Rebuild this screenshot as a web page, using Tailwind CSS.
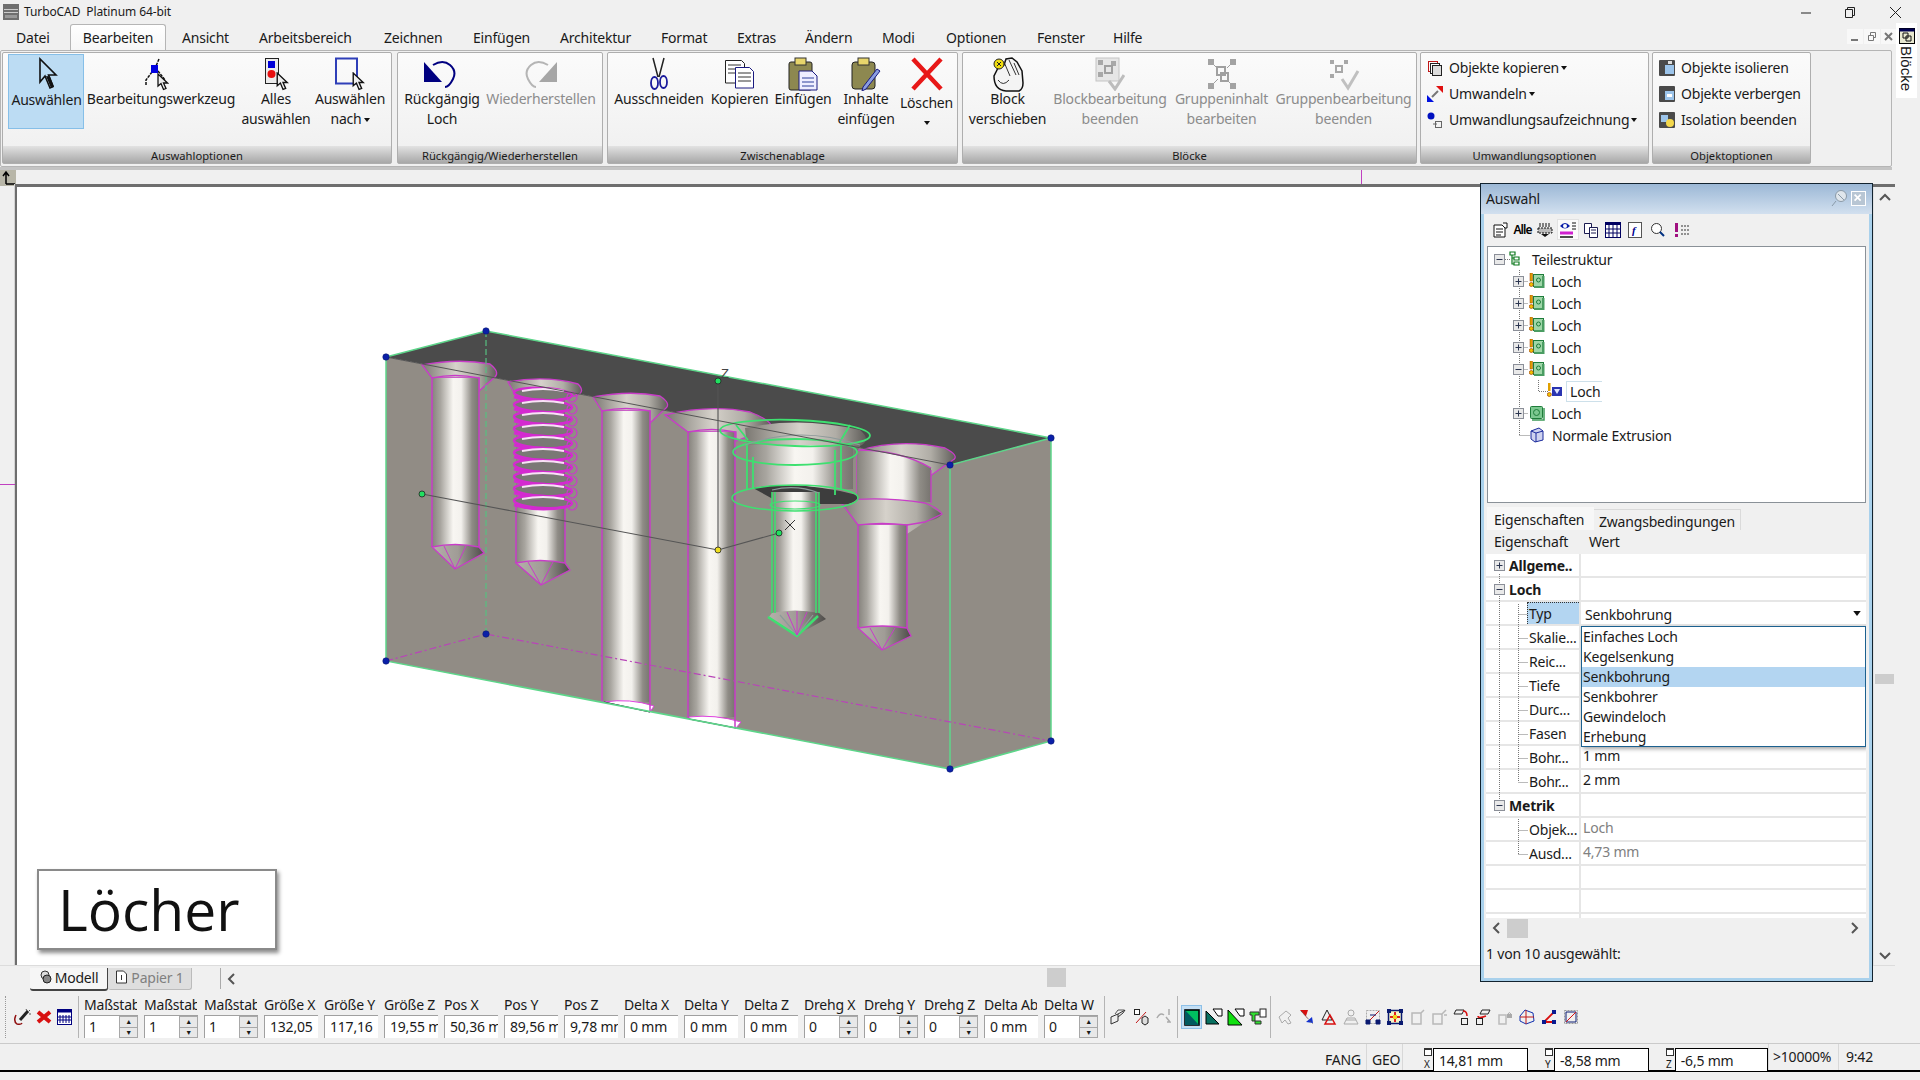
<!DOCTYPE html>
<html lang="de">
<head>
<meta charset="UTF-8">
<title>TurboCAD Platinum 64-bit</title>
<script src="https://cdn.jsdelivr.net/npm/@tailwindcss/browser@4"></script>
</head>
<body class="bg-[#f0f0f0] text-[#1a1a1a] overflow-hidden">
<!-- shared icon parts -->
<svg class="absolute w-0 h-0">
  <defs>
    <symbol id="cur" viewBox="0 0 12 18"><path d="M1 1v12l3-2.500 2.500 6 2.500-1-2.500-5.500h4z" fill="#eee" stroke="#111" stroke-width="1.300"/></symbol>
    <symbol id="plus" viewBox="0 0 11 11"><rect x=".5" y=".5" width="10" height="10" fill="#e9e9e9" stroke="#8b8f98"/><path d="M2.500 5.500h6M5.500 2.500v6" stroke="#2b3550"/></symbol>
    <symbol id="minus" viewBox="0 0 11 11"><rect x=".5" y=".5" width="10" height="10" fill="#e9e9e9" stroke="#8b8f98"/><path d="M2.500 5.500h6" stroke="#2b3550"/></symbol>
    <symbol id="hole" viewBox="0 0 16 16"><rect x="4.500" y="1.500" width="10" height="12" fill="#9fd6a8" stroke="#1e7c3a"/><rect x="13" y="3" width="2.500" height="12" fill="#4a9d62"/><rect x="5" y="13" width="10" height="2" fill="#4a9d62"/><circle cx="9.500" cy="7" r="2" fill="none" stroke="#1e7c3a"/><rect x="1" y="0" width="2.500" height="8" fill="#e0a000" stroke="#a04000" stroke-width=".5"/><circle cx="2.300" cy="11.500" r="2" fill="#f2c200" stroke="#a04000" stroke-width=".7"/></symbol>
    <symbol id="drop" viewBox="0 0 6 4"><path d="M0 0h6L3 4z" fill="#111"/></symbol>
    <linearGradient id="cyl" x1="0" x2="1" y1="0" y2="0"><stop offset="0" stop-color="#85827c"/><stop offset=".18" stop-color="#a8a59f"/><stop offset=".45" stop-color="#f8f6f2"/><stop offset=".62" stop-color="#f3f1ed"/><stop offset=".85" stop-color="#8f8c86"/><stop offset="1" stop-color="#77746f"/></linearGradient>
    <linearGradient id="cone" x1="0" x2="1" y1="0" y2="0"><stop offset="0" stop-color="#7b7872"/><stop offset=".45" stop-color="#d6d2cb"/><stop offset=".75" stop-color="#b0ada6"/><stop offset="1" stop-color="#5f5d59"/></linearGradient>
    <linearGradient id="tip" x1="0" x2="1" y1="0" y2="0"><stop offset="0" stop-color="#b4b0aa"/><stop offset=".5" stop-color="#a09c96"/><stop offset="1" stop-color="#4d4b48"/></linearGradient>
    <g id="ring" fill="none">
      <ellipse cx="543" cy="0" rx="29" ry="6" fill="#7a7875" stroke="#d42ad0" stroke-width="2.500" transform="rotate(3 543 0)"/>
      <path d="M522 -3q21 -4 42 0" stroke="#f8e2f6" stroke-width="2"/>
      <path d="M514 3q27 8 56 1" stroke="#d42ad0" stroke-width="2.500"/>
      <ellipse cx="572" cy="3" rx="5" ry="5" stroke="#c83cc8" stroke-width="1.200"/>
    </g>
  </defs>
</svg>

<div class="relative flex flex-col w-[1920px] h-[1080px] font-['Noto_Sans',sans-serif] text-[14px] tracking-[-0.2px]">

  <!-- title bar -->
  <div class="h-[24px] flex items-center pl-[3px] text-[12px] tracking-[-0.1px]">
    <svg class="w-[16px] h-[16px] mr-[5px]" viewBox="0 0 16 16"><rect width="16" height="16" fill="#6f6f6f"/><rect x="1" y="5" width="14" height="1" fill="#ccc"/><rect x="1" y="8" width="14" height="1" fill="#ccc"/><rect x="2" y="11" width="12" height="3" fill="#999"/></svg>
    <span>TurboCAD&nbsp; Platinum 64-bit</span>
    <div class="ml-auto flex">
      <svg class="w-[45px] h-[20px]" viewBox="0 0 45 20"><path d="M17 11h10" stroke="#222"/></svg>
      <svg class="w-[45px] h-[20px]" viewBox="0 0 45 20"><path d="M16.500 7.500h7v8h-7zM18.500 7.500v-2h7v8h-2" fill="none" stroke="#222"/></svg>
      <svg class="w-[46px] h-[20px]" viewBox="0 0 46 20"><path d="M16 5l11 11M27 5L16 16" stroke="#222"/></svg>
    </div>
  </div>

  <!-- menu -->
  <div class="h-[26px] flex items-end pl-[16px] relative">
    <span class="w-[54px] pb-[2px]">Datei</span>
    <span class="w-[96px] h-[26px] flex items-center justify-center bg-gradient-to-b from-white to-[#f6f6f6] border border-b-0 border-[#b5b5b5] rounded-t-[3px]">Bearbeiten</span>
    <span class="ml-[16px] w-[77px] pb-[2px]">Ansicht</span>
    <span class="w-[125px] pb-[2px]">Arbeitsbereich</span>
    <span class="w-[89px] pb-[2px]">Zeichnen</span>
    <span class="w-[87px] pb-[2px]">Einfügen</span>
    <span class="w-[101px] pb-[2px]">Architektur</span>
    <span class="w-[76px] pb-[2px]">Format</span>
    <span class="w-[68px] pb-[2px]">Extras</span>
    <span class="w-[77px] pb-[2px]">Ändern</span>
    <span class="w-[64px] pb-[2px]">Modi</span>
    <span class="w-[91px] pb-[2px]">Optionen</span>
    <span class="w-[76px] pb-[2px]">Fenster</span>
    <span class="pb-[2px]">Hilfe</span>
    <div class="absolute left-[1847px] top-[5px] flex gap-[1px]">
      <svg class="w-[16px] h-[15px] bg-[#f8f8f8]" viewBox="0 0 16 15"><path d="M4 11h7" stroke="#777" stroke-width="2"/></svg>
      <svg class="w-[16px] h-[15px] bg-[#f8f8f8]" viewBox="0 0 16 15"><path d="M4.500 6.500h5v5h-5zM6.500 6V3.500h5v5H10" fill="none" stroke="#777"/></svg>
      <svg class="w-[16px] h-[15px] bg-[#f8f8f8]" viewBox="0 0 16 15"><path d="M4 4l7 7M11 4l-7 7" stroke="#777" stroke-width="2"/></svg>
    </div>
  </div>

  <!-- ribbon -->
  <div class="h-[117px] w-[1892px] border border-[#b5b5b5] rounded-[2px] pt-[1px] pl-[1px] flex items-stretch">

    <!-- Auswahloptionen -->
    <div class="w-[390px] h-[112px] flex flex-col rounded-[2px] border border-[#aeaeae] bg-gradient-to-b from-[#fbfbfb] to-[#efefef]">
      <div class="flex-1 flex pl-[5px] pt-[1px] text-center leading-[20px]">
        <div class="w-[76px] h-[75px] bg-[#bcdcf3] border border-[#86bfe8] flex flex-col items-center">
          <svg class="w-[24px] h-[34px] mt-[2px]" viewBox="0 0 24 34"><path d="M6 2v23l5-6 5 12 3-1.500-4.500-11.500H22z" fill="none" stroke="#111" stroke-width="1.600"/><path d="M12 19l5 12 3-1.500-4-10z" fill="#111"/></svg>
          <span class="-mt-[1px] ml-[1px]">Auswählen</span>
        </div>
        <div class="w-[154px] flex flex-col items-center">
          <svg class="w-[30px] h-[34px] mt-[3px] -ml-[8px]" viewBox="0 0 30 34"><path d="M17 2l-3 7M10 15l-6 8v5M16 14l7 9" fill="none" stroke="#111" stroke-width="1.500" stroke-dasharray="3 1"/><rect x="9" y="8" width="7" height="8" fill="#0000e0"/><use href="#cur" x="15" y="16" width="12" height="18"/></svg>
          <span class="-mt-[2px]">Bearbeitungswerkzeug</span>
        </div>
        <div class="w-[76px] flex flex-col items-center">
          <svg class="w-[28px] h-[34px] mt-[3px]" viewBox="0 0 28 34"><rect x="3.500" y="1.500" width="13" height="25" fill="#ececec" stroke="#222"/><rect x="6" y="4" width="7" height="7" fill="#0000d8"/><circle cx="9.500" cy="17" r="4" fill="#e81010"/><use href="#cur" x="14" y="15" width="13" height="19"/></svg>
          <span class="-mt-[2px]">Alles<br>auswählen</span>
        </div>
        <div class="w-[72px] flex flex-col items-center">
          <svg class="w-[32px] h-[34px] mt-[3px]" viewBox="0 0 32 34"><rect x="2" y="1.500" width="21" height="25" fill="none" stroke="#2f3fb8" stroke-width="2"/><use href="#cur" x="18" y="15" width="13" height="19"/></svg>
          <span class="-mt-[2px]">Auswählen<br>nach<svg class="inline w-[6px] h-[4px] ml-[2px] align-[2px]"><use href="#drop"/></svg></span>
        </div>
      </div>
      <div class="h-[17px] bg-gradient-to-b from-[#e2e2e2] to-[#a8a8a8] text-[11.200px] leading-[20px] text-center tracking-normal">Auswahloptionen</div>
    </div>

    <!-- Rueckgaengig -->
    <div class="ml-[5px] w-[206px] h-[112px] flex flex-col rounded-[2px] border border-[#aeaeae] bg-gradient-to-b from-[#fbfbfb] to-[#efefef]">
      <div class="flex-1 flex pl-[4px] pt-[1px] text-center leading-[20px]">
        <div class="w-[80px] flex flex-col items-center">
          <svg class="w-[34px] h-[34px] mt-[3px] -ml-[4px]" viewBox="0 0 34 34"><path d="M1 5v20h18z" fill="#000080"/><path d="M10 8q10-6 17 0t3 14-8 8" fill="none" stroke="#000080" stroke-width="2"/></svg>
          <span class="-mt-[2px]">Rückgängig<br>Loch</span>
        </div>
        <div class="w-[118px] flex flex-col items-center text-[#8c8c8c]">
          <svg class="w-[34px] h-[34px] mt-[3px]" viewBox="0 0 34 34"><path d="M33 5v20H15z" fill="#a6a6a6"/><path d="M24 8q-10-6-17 0t-3 14 8 8" fill="none" stroke="#b5b5b5" stroke-width="2"/></svg>
          <span class="-mt-[2px]">Wiederherstellen</span>
        </div>
      </div>
      <div class="h-[17px] bg-gradient-to-b from-[#e2e2e2] to-[#a8a8a8] text-[11.200px] leading-[20px] text-center tracking-normal">Rückgängig/Wiederherstellen</div>
    </div>

    <!-- Zwischenablage -->
    <div class="ml-[4px] w-[351px] h-[112px] flex flex-col rounded-[2px] border border-[#aeaeae] bg-gradient-to-b from-[#fbfbfb] to-[#efefef]">
      <div class="flex-1 flex pl-[3px] pt-[1px] text-center leading-[20px]">
        <div class="w-[96px] flex flex-col items-center">
          <svg class="w-[22px] h-[34px] mt-[3px]" viewBox="0 0 22 34"><path d="M5 1l5 19M16 1l-5 19" stroke="#222" stroke-width="1.500" fill="none"/><ellipse cx="6.500" cy="26" rx="3.500" ry="6" fill="none" stroke="#1a1a9c" stroke-width="1.800"/><ellipse cx="15.500" cy="25" rx="3.500" ry="6" fill="none" stroke="#1a1a9c" stroke-width="1.800"/></svg>
          <span class="-mt-[2px]">Ausschneiden</span>
        </div>
        <div class="w-[65px] flex flex-col items-center">
          <svg class="w-[32px] h-[32px] mt-[5px]" viewBox="0 0 32 32"><path d="M1.500 1.500h16l3 3V24h-19z" fill="#fff" stroke="#222"/><path d="M4 6h13M4 10h13M4 14h13" stroke="#333"/><path d="M11.500 8.500h14l4 4V29h-18z" fill="#fff" stroke="#1a1a80"/><path d="M14 14h13M14 18h13M14 22h13" stroke="#333"/></svg>
          <span class="-mt-[2px]">Kopieren</span>
        </div>
        <div class="w-[62px] flex flex-col items-center">
          <svg class="w-[30px] h-[34px] mt-[3px]" viewBox="0 0 30 34"><rect x="1" y="5" width="23" height="28" rx="2" fill="#8d8850" stroke="#222"/><rect x="7" y="1" width="11" height="7" fill="#e7d56b" stroke="#333"/><path d="M11 14h13l5 5v14H11z" fill="#eef" stroke="#1a1a80"/><path d="M14 21h12M14 25h12M14 29h12" stroke="#2c3f9a"/></svg>
          <span class="-mt-[2px]">Einfügen</span>
        </div>
        <div class="w-[64px] flex flex-col items-center">
          <svg class="w-[30px] h-[34px] mt-[3px]" viewBox="0 0 30 34"><rect x="1" y="5" width="23" height="27" rx="3" fill="#8d8850" stroke="#222"/><rect x="7" y="1" width="11" height="7" fill="#e7d56b" stroke="#333"/><path d="M12 30L26 12l3 2-14 18-4 2z" fill="#8a9de0" stroke="#1a1a80"/></svg>
          <span class="-mt-[2px]">Inhalte<br>einfügen</span>
        </div>
        <div class="w-[57px] flex flex-col items-center">
          <svg class="w-[34px] h-[34px] mt-[3px]" viewBox="0 0 34 34"><path d="M3 2l28 30M31 2L3 32" stroke="#e81818" stroke-width="4.500"/></svg>
          <span class="mt-[2px]">Löschen</span>
          <svg class="w-[6px] h-[4px] mt-[8px]"><use href="#drop"/></svg>
        </div>
      </div>
      <div class="h-[17px] bg-gradient-to-b from-[#e2e2e2] to-[#a8a8a8] text-[11.200px] leading-[20px] text-center tracking-normal">Zwischenablage</div>
    </div>

    <!-- Bloecke -->
    <div class="ml-[4px] w-[455px] h-[112px] flex flex-col rounded-[2px] border border-[#aeaeae] bg-gradient-to-b from-[#fbfbfb] to-[#efefef]">
      <div class="flex-1 flex pl-[3px] pt-[1px] text-center leading-[20px]">
        <div class="w-[83px] flex flex-col items-center">
          <svg class="w-[32px] h-[36px] mt-[2px]" viewBox="0 0 32 36"><path d="M2 20q0 14 12 15h13q4-2 4-8l-1-12-5-9-5-4-6 1-2 6-6 3z" fill="#f4f4f4" stroke="#111" stroke-width="1.500"/><path d="M12 6l6 14M17 4l7 15M22 7l5 12M6 24q5 7 11 0" fill="none" stroke="#333"/><circle cx="7" cy="8" r="5" fill="#f0dd10" stroke="#222"/><path d="M5 6l4 4M9 6l-4 4" stroke="#222"/></svg>
          <span class="-mt-[3px]">Block<br>verschieben</span>
        </div>
        <div class="w-[122px] flex flex-col items-center text-[#8c8c8c]">
          <svg class="w-[30px] h-[34px] mt-[3px]" viewBox="0 0 30 34"><rect x="1" y="1" width="23" height="23" fill="#e6e6e6" stroke="#c4c4c4"/><path d="M3 3h5v5H3zM16 4h5v5h-5zM3 15h5v5H3z" fill="#a8a8a8"/><path d="M10 9h7v7h-7z" fill="none" stroke="#a0a0a0" stroke-width="2"/><path d="M14 24l6 8 9-14" fill="none" stroke="#bdbdbd" stroke-width="3"/></svg>
          <span class="-mt-[2px]">Blockbearbeitung<br>beenden</span>
        </div>
        <div class="w-[101px] flex flex-col items-center text-[#8c8c8c]">
          <svg class="w-[30px] h-[32px] mt-[4px]" viewBox="0 0 30 32"><path d="M1 1h6v6H1zM23 1h6v6h-6zM1 25h6v6H1zM23 25h6v6h-6z" fill="#a3a3a3"/><path d="M10 9h8v8h-8zM14 15h7v8h-7z" fill="none" stroke="#a0a0a0" stroke-width="2"/><path d="M7 7l3 3M23 7l-3 3M7 25l4-4M23 25l-2-2" stroke="#a0a0a0"/></svg>
          <span class="-mt-[1px]">Gruppeninhalt<br>bearbeiten</span>
        </div>
        <div class="w-[143px] flex flex-col items-center text-[#8c8c8c]">
          <svg class="w-[32px] h-[34px] mt-[3px]" viewBox="0 0 32 34"><path d="M2 3h4v4H2zM16 3h4v4h-4zM2 17h4v4H2z" fill="#a8a8a8"/><path d="M8 9h6v6H8z" fill="none" stroke="#a8a8a8" stroke-width="2"/><path d="M14 22l6 9 10-17" fill="none" stroke="#c0c0c0" stroke-width="3"/></svg>
          <span class="-mt-[2px]">Gruppenbearbeitung<br>beenden</span>
        </div>
      </div>
      <div class="h-[17px] bg-gradient-to-b from-[#e2e2e2] to-[#a8a8a8] text-[11.200px] leading-[20px] text-center tracking-normal">Blöcke</div>
    </div>

    <!-- Umwandlungsoptionen -->
    <div class="ml-[3px] w-[229px] h-[112px] flex flex-col rounded-[2px] border border-[#aeaeae] bg-gradient-to-b from-[#fbfbfb] to-[#efefef]">
      <div class="flex-1 flex flex-col pl-[6px] pt-[2px] leading-[26px]">
        <div class="flex items-center h-[26px]"><svg class="w-[16px] h-[16px] mr-[6px]" viewBox="0 0 16 16"><rect x="1.500" y="1.500" width="9" height="10" fill="none" stroke="#c01818"/><rect x="3.500" y="3.500" width="9" height="10" fill="#fff" stroke="#222"/><rect x="5.500" y="5.500" width="9" height="10" fill="#ddd" stroke="#222"/></svg>Objekte kopieren<svg class="w-[6px] h-[4px] ml-[2px]"><use href="#drop"/></svg></div>
        <div class="flex items-center h-[26px]"><svg class="w-[16px] h-[16px] mr-[6px]" viewBox="0 0 16 16"><path d="M0 16V9l7 7z" fill="#0010e0"/><path d="M16 7V0H9z" fill="#e01010"/><path d="M5 11l6-6" stroke="#777" stroke-width="2"/></svg>Umwandeln<svg class="w-[6px] h-[4px] ml-[2px]"><use href="#drop"/></svg></div>
        <div class="flex items-center h-[26px]"><svg class="w-[16px] h-[16px] mr-[6px]" viewBox="0 0 16 16"><circle cx="4" cy="4" r="3.500" fill="#0010c0"/><rect x="8.500" y="9.500" width="6" height="6" fill="none" stroke="#666"/><path d="M6 12h4" stroke="#666"/></svg>Umwandlungsaufzeichnung<svg class="w-[6px] h-[4px] ml-[2px]"><use href="#drop"/></svg></div>
      </div>
      <div class="h-[17px] bg-gradient-to-b from-[#e2e2e2] to-[#a8a8a8] text-[11.200px] leading-[20px] text-center tracking-normal">Umwandlungsoptionen</div>
    </div>

    <!-- Objektoptionen -->
    <div class="ml-[3px] w-[159px] h-[112px] flex flex-col rounded-[2px] border border-[#aeaeae] bg-gradient-to-b from-[#fbfbfb] to-[#efefef]">
      <div class="flex-1 flex flex-col pl-[6px] pt-[2px] leading-[26px]">
        <div class="flex items-center h-[26px]"><svg class="w-[16px] h-[16px] mr-[6px]" viewBox="0 0 16 16"><rect width="16" height="16" rx="1" fill="#4a4a4a"/><rect x="6" y="5" width="9" height="9" fill="#9cc4ea"/><rect x="9" y="1" width="4" height="3" fill="#ddd"/></svg>Objekte isolieren</div>
        <div class="flex items-center h-[26px]"><svg class="w-[16px] h-[16px] mr-[6px]" viewBox="0 0 16 16"><rect width="16" height="16" rx="1" fill="#4a4a4a"/><rect x="6" y="5" width="9" height="9" fill="#9cc4ea"/><rect x="8" y="8" width="5" height="3" fill="#fff"/></svg>Objekte verbergen</div>
        <div class="flex items-center h-[26px]"><svg class="w-[16px] h-[16px] mr-[6px]" viewBox="0 0 16 16"><rect width="16" height="16" rx="1" fill="#4a4a4a"/><rect x="2" y="3" width="7" height="7" fill="#9cc4ea"/><circle cx="11" cy="11" r="4" fill="#f4d84c"/></svg>Isolation beenden</div>
      </div>
      <div class="h-[17px] bg-gradient-to-b from-[#e2e2e2] to-[#a8a8a8] text-[11.200px] leading-[20px] text-center tracking-normal">Objektoptionen</div>
    </div>
  </div>
  <div class="h-[3px] w-[1892px] bg-[#c4c4c4]"></div>

  <!-- ruler strip -->
  <div class="relative h-[14px] w-[1894px]">
    <svg class="w-[16px] h-[16px]" viewBox="0 0 16 16"><rect width="16" height="16" fill="#b8b6a8"/><path d="M6 14V3M3 6l3-4 3 4M6 14h9" stroke="#000" stroke-width="1.500" fill="none"/></svg>
    <div class="absolute left-[1361px] top-0 w-[1px] h-[14px] bg-[#c040c0]"></div>
  </div>

  <!-- canvas row -->
  <div class="h-[781px] flex">
    <div class="relative w-[15px] border-r border-[#d4d4d4]">
      <div class="absolute left-0 top-[300px] h-[1px] w-[15px] bg-[#c040c0]"></div>
    </div>
    <div class="relative flex-none w-[1880px] h-[781px] bg-white border-t-[3px] border-l-2 border-[#6e6e6e]">
      <svg class="absolute left-0 top-0" width="1878" height="778" viewBox="17 187 1878 778">
        <!-- block faces -->
        <path d="M386 357L486 331L1051 438L950 465Z" fill="#4b4b4b"/>
        <path d="M386 357L950 465V769L386 661Z" fill="#918c85"/>
        <path d="M950 465L1051 438V741L950 769Z" fill="#918c85"/>

        <!-- hole 1 -->
        <path d="M422 365Q458 358 490 364Q500 372 495 377L479 391V378H432Z" fill="url(#cone)" stroke="#c83cc8" stroke-width="1.300"/>
        <rect x="432" y="378" width="47" height="169" fill="url(#cyl)"/>
        <path d="M432 547V378Q455 373 479 378V547" fill="none" stroke="#c83cc8" stroke-width="1.500"/>
        <path d="M432 547Q455 542 479 547L484 553L455 569Z" fill="url(#tip)" stroke="#c83cc8" stroke-width="1.300"/>
        <path d="M444 546L455 569L466 546" fill="none" stroke="#c83cc8"/>

        <!-- hole 2, threaded -->
        <path d="M508 382Q545 375 578 384Q586 392 576 396H516Z" fill="url(#cone)" stroke="#c83cc8" stroke-width="1.300"/>
        <rect x="516" y="395" width="49" height="168" fill="url(#cyl)"/>
        <path d="M516 506V563M565 506V563" stroke="#c83cc8" stroke-width="1.500"/>
        <use href="#ring" y="394"/><use href="#ring" y="406"/><use href="#ring" y="418"/><use href="#ring" y="430"/><use href="#ring" y="442"/><use href="#ring" y="454"/><use href="#ring" y="466"/><use href="#ring" y="478"/><use href="#ring" y="490"/><use href="#ring" y="502"/>
        <path d="M516 563Q540 558 565 563L570 570L541 585Z" fill="url(#tip)" stroke="#c83cc8" stroke-width="1.300"/>
        <path d="M528 562L541 585L553 562" fill="none" stroke="#c83cc8"/>

        <!-- hole 3, through -->
        <path d="M593 397Q630 390 660 396Q672 404 665 409L650 423V411H602Z" fill="url(#cone)" stroke="#c83cc8" stroke-width="1.300"/>
        <rect x="602" y="411" width="48" height="291" fill="url(#cyl)"/>
        <path d="M604 702L650 712L654 706Q630 698 604 702Z" fill="#fff" stroke="#e040e0"/>
        <path d="M602 702V411Q626 406 650 411V712" fill="none" stroke="#c83cc8" stroke-width="1.500"/>
        <path d="M604 702L650 712" stroke="#222" stroke-width="1.200"/>

        <!-- hole 4, through -->
        <path d="M665 415Q710 404 750 412Q775 422 770 428L736 441V432H688Z" fill="url(#cone)" stroke="#c83cc8" stroke-width="1.300"/>
        <rect x="688" y="432" width="47" height="285" fill="url(#cyl)"/>
        <path d="M689 719L736 728L741 722Q715 714 689 717Z" fill="#fff" stroke="#e040e0"/>
        <path d="M688 719V432Q712 427 735 432V728" fill="none" stroke="#c83cc8" stroke-width="1.500"/>
        <path d="M689 719L736 728" stroke="#222" stroke-width="1.200"/>

        <!-- hole 6, counterbore -->
        <path d="M857 451Q900 438 945 448Q960 456 953 460L930 476V500H857Z" fill="url(#cone)" stroke="#c83cc8" stroke-width="1.300"/>
        <path d="M857 450Q900 450 931 468V502H857Z" fill="url(#cyl)"/>
        <path d="M857 450Q900 450 931 468" fill="none" stroke="#c83cc8" stroke-width="1.300"/>
        <path d="M840 501Q880 496 925 503L942 514Q938 520 925 522L907 534V525H858Z" fill="url(#cone)"/>
        <path d="M858 525H907L925 522L942 514Q938 508 925 503Q880 496 840 501" fill="none" stroke="#c83cc8" stroke-width="1.300"/>
        <rect x="858" y="525" width="49" height="103" fill="url(#cyl)"/>
        <path d="M858 628V525Q882 522 907 525V628" fill="none" stroke="#c83cc8" stroke-width="1.500"/>
        <path d="M858 628Q882 624 907 628L911 636L882 650Z" fill="url(#tip)" stroke="#c83cc8" stroke-width="1.300"/>
        <path d="M870 628L882 650L895 628" fill="none" stroke="#c83cc8"/>
        <path d="M931 470V503M840 501L858 525" stroke="#c83cc8" stroke-width="1.300"/>

        <!-- hole 5, selected -->
        <path d="M745 428Q800 416 860 430Q872 440 860 446L853 460V488H747V445Z" fill="url(#cone)"/>
        <rect x="747" y="445" width="106" height="44" fill="url(#cyl)"/>
        <path d="M753 488Q800 480 857 495Q860 500 848 504H782Z" fill="#3d3d3d"/>
        <rect x="772" y="492" width="47" height="121" fill="url(#cyl)"/>
        <path d="M772 613Q795 608 819 613L826 619L797 635L768 618Z" fill="url(#tip)"/>
        <g fill="none" stroke="#3ee070" stroke-width="1.800">
          <ellipse cx="795" cy="433" rx="75" ry="13" transform="rotate(2 795 433)"/>
          <ellipse cx="795" cy="452" rx="62" ry="13"/>
          <ellipse cx="795" cy="498" rx="63" ry="13" stroke-width="1.500"/>
          <path d="M747 445V490M753 457V488M835 450V495M841 445V490M736 425L748 440M850 425L838 445"/>
          <path d="M772 492V613M819 492V613M775 492V613M816 492V613" stroke-width="1.500"/>
          <path d="M768 617L797 636L818 616" stroke-width="2.500"/>
          <ellipse cx="795" cy="505" rx="25" ry="4" stroke-width="1.200"/>
        </g>
        <g fill="none" stroke="#8d9a9a" stroke-width="1.200">
          <path d="M745 445Q800 425 860 445M772 490q24-6 47 3M780 615l17 20 16-20"/>
        </g>
        <path d="M787 612l10 23 10-23M797 611v24" fill="none" stroke="#c83cc8"/>

        <!-- block edges -->
        <g fill="none" stroke="#5dd68a" stroke-width="1.500">
          <path d="M386 357L486 331L1051 438L950 465V769L386 661ZM1051 438V741L950 769"/>
        </g>
        <path d="M486 331V634" stroke="#57c080" stroke-width="1.200" stroke-dasharray="6 3" fill="none"/>
        <path d="M386 661L486 634L1051 741" stroke="#b845b8" stroke-width="1.200" stroke-dasharray="7 3 2 3" fill="none"/>
        <path d="M386 357L950 465" stroke="#555" stroke-width="1" fill="none"/>

        <!-- axes and handles -->
        <path d="M422 494L718 550L779 533M718 550V381" stroke="#555" stroke-width="1.100" fill="none"/>
        <path d="M785 520l10 10M795 520l-10 10" stroke="#333"/>
        <text x="721" y="378" font-family="Liberation Sans" font-size="13" fill="#444">Z</text>
        <g stroke="#222" stroke-width=".8">
          <circle cx="422" cy="494" r="3" fill="#20e060"/><circle cx="718" cy="381" r="3" fill="#20e060"/><circle cx="779" cy="533" r="3" fill="#20e060"/><circle cx="718" cy="550" r="3" fill="#f0e020"/>
        </g>
        <g fill="#0a1fa8" stroke="#0a1a70" stroke-width=".6">
          <circle cx="386" cy="357" r="3.200"/><circle cx="486" cy="331" r="3.200"/><circle cx="1051" cy="438" r="3.200"/><circle cx="950" cy="465" r="3.200"/><circle cx="1051" cy="741" r="3.200"/><circle cx="950" cy="769" r="3.200"/><circle cx="386" cy="661" r="3.200"/><circle cx="486" cy="634" r="3.200"/>
        </g>
      </svg>

      <!-- drawing label -->
      <div class="absolute left-[20px] top-[682px] w-[240px] h-[81px] bg-white border-2 border-[#8a8a8a] shadow-[2px_3px_4px_rgba(0,0,0,0.45)] flex items-center pl-[19px] text-[57px] leading-none tracking-normal font-['Open_Sans',sans-serif] text-[#111]">Löcher</div>

      <!-- vertical scrollbar -->
      <div class="absolute right-0 top-0 w-[22px] h-[778px] bg-[#f0f0f0] border-l border-[#e2e2e2]">
        <svg class="absolute left-[5px] top-[5px] w-[12px] h-[12px]" viewBox="0 0 12 12"><path d="M1 8l5-5 5 5" fill="none" stroke="#555" stroke-width="2"/></svg>
        <div class="absolute left-[1px] top-[487px] w-[19px] h-[10px] bg-[#cdcdcd]"></div>
        <svg class="absolute left-[5px] top-[762px] w-[12px] h-[12px]" viewBox="0 0 12 12"><path d="M1 4l5 5 5-5" fill="none" stroke="#555" stroke-width="2"/></svg>
      </div>
    </div>
    <div class="flex-1"></div>
  </div>

  <!-- sheet tabs -->
  <div class="h-[25px] flex w-[1895px] items-start pl-[30px] pt-[2px] border-t border-[#dcdcdc] relative">
    <div class="h-[23px] w-[78px] flex items-center justify-center pb-[3px] bg-[#f6f6f6] border-b-2 border-r border-[#444] rounded-b-[3px]">
      <svg class="w-[14px] h-[14px] mr-[2px]" viewBox="0 0 14 14"><circle cx="6" cy="5" r="4" fill="#ddd" stroke="#333"/><circle cx="8" cy="9" r="4" fill="#888" stroke="#222"/></svg>Modell
    </div>
    <div class="h-[22px] w-[84px] flex items-center justify-center pb-[3px] bg-[#dedede] border-r border-b border-[#bbb] rounded-b-[3px] text-[#808080]">
      <svg class="w-[13px] h-[14px] mr-[3px]" viewBox="0 0 13 14"><path d="M1.500 1h7l3 3v9h-10z" fill="#fff" stroke="#333"/><path d="M6.500 5v5" stroke="#333"/></svg>Papier 1
    </div>
    <div class="ml-[28px] w-[1px] h-[21px] bg-[#aaa]"></div>
    <svg class="ml-[5px] mt-[5px] w-[10px] h-[12px]" viewBox="0 0 10 12"><path d="M8 1L3 6l5 5" fill="none" stroke="#555" stroke-width="2"/></svg>
    <div class="absolute left-[1047px] top-[2px] w-[19px] h-[19px] bg-[#cdcdcd]"></div>
  </div>

  <!-- selection info toolbar -->
  <div class="h-[53px] flex items-start pl-[4px] pt-[6px]">
    <div class="h-[42px] w-[1px] border-l border-dotted border-[#999] ml-[1px]"></div>
    <div class="w-[72px] h-[42px] flex items-center pl-[7px] gap-[5px]">
      <svg class="w-[18px] h-[18px]" viewBox="0 0 18 18"><path d="M7 12L15 3" stroke="#222" stroke-width="3"/><path d="M3 7q-3 6 1 9 4 1 5-1" fill="none" stroke="#901010" stroke-width="1.500"/><path d="M13 1l1 2M16 3l1-1M16 6l2 0" stroke="#555"/></svg>
      <svg class="w-[16px] h-[16px]" viewBox="0 0 16 16"><path d="M2 3l12 10M14 3L2 13" stroke="#d81010" stroke-width="4"/></svg>
      <svg class="w-[15px] h-[16px]" viewBox="0 0 15 16"><rect x=".5" y=".5" width="14" height="15" fill="#fff" stroke="#000080"/><rect x=".5" y=".5" width="14" height="3" fill="#000080"/><path d="M3 6v8M6 6v8M9 6v8M12 6v8M1 8h13M1 11h13" stroke="#000080"/></svg>
    </div>
    <div class="w-[1px] h-[42px] bg-[#b4b4b4]"></div>

    <!-- fields -->
    <div class="flex ml-[5px]">
      <div class="w-[60px]">
        <div class="h-[19px] w-[53px] overflow-hidden whitespace-nowrap leading-[18px]">Maßstab</div>
        <div class="flex h-[23px] w-[54px] bg-white border-t border-l border-[#a0a0a0]"><span class="flex-1 pl-[4px] leading-[22px]">1</span><div class="w-[19px] flex flex-col border border-[#a8a8a8] bg-[#e8e8e8] text-[7px] leading-[10px] text-center"><span class="h-[11px] border-b border-[#a8a8a8]">▲</span><span>▼</span></div></div>
      </div>
      <div class="w-[60px]">
        <div class="h-[19px] w-[53px] overflow-hidden whitespace-nowrap leading-[18px]">Maßstab</div>
        <div class="flex h-[23px] w-[54px] bg-white border-t border-l border-[#a0a0a0]"><span class="flex-1 pl-[4px] leading-[22px]">1</span><div class="w-[19px] flex flex-col border border-[#a8a8a8] bg-[#e8e8e8] text-[7px] leading-[10px] text-center"><span class="h-[11px] border-b border-[#a8a8a8]">▲</span><span>▼</span></div></div>
      </div>
      <div class="w-[60px]">
        <div class="h-[19px] w-[53px] overflow-hidden whitespace-nowrap leading-[18px]">Maßstab</div>
        <div class="flex h-[23px] w-[54px] bg-white border-t border-l border-[#a0a0a0]"><span class="flex-1 pl-[4px] leading-[22px]">1</span><div class="w-[19px] flex flex-col border border-[#a8a8a8] bg-[#e8e8e8] text-[7px] leading-[10px] text-center"><span class="h-[11px] border-b border-[#a8a8a8]">▲</span><span>▼</span></div></div>
      </div>
      <div class="w-[60px]"><div class="h-[19px] overflow-hidden whitespace-nowrap leading-[18px]">Größe X</div><div class="h-[23px] w-[54px] overflow-hidden whitespace-nowrap bg-white border-t border-l border-[#a0a0a0] pl-[5px] leading-[22px]">132,05</div></div>
      <div class="w-[60px]"><div class="h-[19px] overflow-hidden whitespace-nowrap leading-[18px]">Größe Y</div><div class="h-[23px] w-[54px] overflow-hidden whitespace-nowrap bg-white border-t border-l border-[#a0a0a0] pl-[5px] leading-[22px]">117,16</div></div>
      <div class="w-[60px]"><div class="h-[19px] overflow-hidden whitespace-nowrap leading-[18px]">Größe Z</div><div class="h-[23px] w-[54px] overflow-hidden whitespace-nowrap bg-white border-t border-l border-[#a0a0a0] pl-[5px] leading-[22px]">19,55 mm</div></div>
      <div class="w-[60px]"><div class="h-[19px] overflow-hidden whitespace-nowrap leading-[18px]">Pos X</div><div class="h-[23px] w-[54px] overflow-hidden whitespace-nowrap bg-white border-t border-l border-[#a0a0a0] pl-[5px] leading-[22px]">50,36 mm</div></div>
      <div class="w-[60px]"><div class="h-[19px] overflow-hidden whitespace-nowrap leading-[18px]">Pos Y</div><div class="h-[23px] w-[54px] overflow-hidden whitespace-nowrap bg-white border-t border-l border-[#a0a0a0] pl-[5px] leading-[22px]">89,56 mm</div></div>
      <div class="w-[60px]"><div class="h-[19px] overflow-hidden whitespace-nowrap leading-[18px]">Pos Z</div><div class="h-[23px] w-[54px] overflow-hidden whitespace-nowrap bg-white border-t border-l border-[#a0a0a0] pl-[5px] leading-[22px]">9,78 mm</div></div>
      <div class="w-[60px]"><div class="h-[19px] overflow-hidden whitespace-nowrap leading-[18px]">Delta X</div><div class="h-[23px] w-[54px] overflow-hidden whitespace-nowrap bg-white border-t border-l border-[#a0a0a0] pl-[5px] leading-[22px]">0 mm</div></div>
      <div class="w-[60px]"><div class="h-[19px] overflow-hidden whitespace-nowrap leading-[18px]">Delta Y</div><div class="h-[23px] w-[54px] overflow-hidden whitespace-nowrap bg-white border-t border-l border-[#a0a0a0] pl-[5px] leading-[22px]">0 mm</div></div>
      <div class="w-[60px]"><div class="h-[19px] overflow-hidden whitespace-nowrap leading-[18px]">Delta Z</div><div class="h-[23px] w-[54px] overflow-hidden whitespace-nowrap bg-white border-t border-l border-[#a0a0a0] pl-[5px] leading-[22px]">0 mm</div></div>
      <div class="w-[60px]">
        <div class="h-[19px] overflow-hidden whitespace-nowrap leading-[18px]">Drehg X</div>
        <div class="flex h-[23px] w-[54px] bg-white border-t border-l border-[#a0a0a0]"><span class="flex-1 pl-[4px] leading-[22px]">0</span><div class="w-[19px] flex flex-col border border-[#a8a8a8] bg-[#e8e8e8] text-[7px] leading-[10px] text-center"><span class="h-[11px] border-b border-[#a8a8a8]">▲</span><span>▼</span></div></div>
      </div>
      <div class="w-[60px]">
        <div class="h-[19px] overflow-hidden whitespace-nowrap leading-[18px]">Drehg Y</div>
        <div class="flex h-[23px] w-[54px] bg-white border-t border-l border-[#a0a0a0]"><span class="flex-1 pl-[4px] leading-[22px]">0</span><div class="w-[19px] flex flex-col border border-[#a8a8a8] bg-[#e8e8e8] text-[7px] leading-[10px] text-center"><span class="h-[11px] border-b border-[#a8a8a8]">▲</span><span>▼</span></div></div>
      </div>
      <div class="w-[60px]">
        <div class="h-[19px] overflow-hidden whitespace-nowrap leading-[18px]">Drehg Z</div>
        <div class="flex h-[23px] w-[54px] bg-white border-t border-l border-[#a0a0a0]"><span class="flex-1 pl-[4px] leading-[22px]">0</span><div class="w-[19px] flex flex-col border border-[#a8a8a8] bg-[#e8e8e8] text-[7px] leading-[10px] text-center"><span class="h-[11px] border-b border-[#a8a8a8]">▲</span><span>▼</span></div></div>
      </div>
      <div class="w-[60px]"><div class="h-[19px] w-[53px] overflow-hidden whitespace-nowrap leading-[18px]">Delta Abstand</div><div class="h-[23px] w-[54px] overflow-hidden whitespace-nowrap bg-white border-t border-l border-[#a0a0a0] pl-[5px] leading-[22px]">0 mm</div></div>
      <div class="w-[60px]">
        <div class="h-[19px] overflow-hidden whitespace-nowrap leading-[18px]">Delta W</div>
        <div class="flex h-[23px] w-[54px] bg-white border-t border-l border-[#a0a0a0]"><span class="flex-1 pl-[4px] leading-[22px]">0</span><div class="w-[19px] flex flex-col border border-[#a8a8a8] bg-[#e8e8e8] text-[7px] leading-[10px] text-center"><span class="h-[11px] border-b border-[#a8a8a8]">▲</span><span>▼</span></div></div>
      </div>
    </div>

    <div class="w-[1px] h-[42px] bg-[#b4b4b4]"></div>
    <!-- selection mode icons -->
    <div class="w-[72px] h-[42px] flex items-center pl-[5px] gap-[7px]">
      <svg class="w-[17px] h-[18px]" viewBox="0 0 17 18"><path d="M1 9l7-3v7l-7 3zM8 6l7-4-2 3-5 4" fill="#eee" stroke="#333"/><path d="M5 6l3-4h6" fill="none" stroke="#555"/></svg>
      <svg class="w-[15px] h-[18px]" viewBox="0 0 15 18"><rect x=".5" y="1.500" width="5" height="5" fill="#fff" stroke="#222"/><path d="M2 15l10-11" stroke="#c01818"/><path d="M8 10l3-2 3 2v5l-3 2-3-2z" fill="#ddd" stroke="#222"/></svg>
      <svg class="w-[15px] h-[18px]" viewBox="0 0 15 18"><path d="M1 10q3-6 7-3M13 1v6M10 9l4 5-3 0" fill="none" stroke="#aaa" stroke-width="1.500"/></svg>
    </div>
    <div class="w-[1px] h-[42px] bg-[#b4b4b4]"></div>
    <!-- workplane icons -->
    <div class="w-[92px] h-[42px] flex items-center pl-[3px] gap-[2px]">
      <div class="w-[21px] h-[24px] flex items-center justify-center bg-[#c4dff4] border border-[#8dc0e8]"><svg class="w-[16px] h-[17px]" viewBox="0 0 16 17"><rect x="1" y="1" width="14" height="15" fill="#00c060" stroke="#000" stroke-width="1.600"/><path d="M1 1l14 15H1z" fill="#005a60"/></svg></div>
      <svg class="w-[18px] h-[18px] ml-[1px]" viewBox="0 0 18 18"><path d="M1 3l13 13H1z" fill="#087060" stroke="#000"/><path d="M8 1h9v7h-4z" fill="#fff" stroke="#000"/></svg>
      <svg class="w-[18px] h-[18px] ml-[2px]" viewBox="0 0 18 18"><path d="M1 2l14 15H1z" fill="#10e010" stroke="#000"/><path d="M8 1h9v7h-4z" fill="#fff" stroke="#000"/></svg>
      <svg class="w-[18px] h-[18px] ml-[2px]" viewBox="0 0 18 18"><path d="M1 4h9v3H6v6H3V7H1zM6 13h6v3H6z" fill="#30e030" stroke="#333"/><rect x="11" y="1" width="6" height="8" fill="#fff" stroke="#222"/></svg>
    </div>
    <div class="w-[1px] h-[42px] bg-[#b4b4b4]"></div>
    <!-- transform icons -->
    <div class="h-[42px] flex items-center pl-[6px] gap-[6px]">
      <svg class="w-[16px] h-[16px]" viewBox="0 0 16 16"><path d="M2 8l7-6 5 4-3 3 3 5-3 1-3-4-3 3z" fill="none" stroke="#aaa"/></svg>
      <svg class="w-[16px] h-[16px]" viewBox="0 0 16 16"><path d="M1 1h8l-2 6 2 3z" fill="#d81010"/><path d="M7 13l6-5 1 6z" fill="#1030d0"/><path d="M2 2l12 13" stroke="#555" stroke-dasharray="1 1"/></svg>
      <svg class="w-[16px] h-[16px]" viewBox="0 0 16 16"><path d="M6 1l5 10H1z" fill="none" stroke="#222"/><path d="M9 6l5 9H4z" fill="none" stroke="#d81010" stroke-width="1.500"/></svg>
      <svg class="w-[16px] h-[16px]" viewBox="0 0 16 16"><circle cx="8" cy="4" r="3" fill="none" stroke="#aaa"/><path d="M1 15l3-6h8l3 6zM3 11h10" fill="none" stroke="#aaa"/></svg>
      <svg class="w-[16px] h-[16px]" viewBox="0 0 16 16"><rect x="1.500" y="1.500" width="13" height="13" fill="none" stroke="#aaa" stroke-dasharray="2 1"/><path d="M2 14L14 2" stroke="#c01818"/><path d="M1 11h4v4H1zM11 11h4v4h-4zM5 6h6" fill="#0a1a70" stroke="#0a1a70"/></svg>
      <svg class="w-[16px] h-[16px]" viewBox="0 0 16 16"><rect x="1.500" y="1.500" width="13" height="13" fill="#f4f4c8" stroke="#0a1a70" stroke-width="1.500"/><path d="M8 3v10M3 8h10" stroke="#e02020" stroke-width="2"/><path d="M6 6h4v4H6z" fill="#f0d020"/><path d="M0 0h4v4H0zM12 0h4v4h-4zM0 12h4v4H0zM12 12h4v4h-4z" fill="#0a1a70"/></svg>
      <svg class="w-[16px] h-[16px]" viewBox="0 0 16 16"><path d="M3 4h9v11H3zM12 4l3-3" fill="none" stroke="#b8b8b8" stroke-width="1.500"/></svg>
      <svg class="w-[16px] h-[16px]" viewBox="0 0 16 16"><path d="M2 5h9v10H2zM10 6l5-5M13 6h3" fill="none" stroke="#b8b8b8" stroke-width="1.500"/></svg>
      <svg class="w-[16px] h-[16px]" viewBox="0 0 16 16"><path d="M1 5l2-4h8l-2 4z" fill="none" stroke="#222"/><path d="M10 2q4 0 4 5" fill="none" stroke="#d81010" stroke-width="1.500"/><rect x="8.500" y="9.500" width="6" height="6" fill="none" stroke="#222"/></svg>
      <svg class="w-[16px] h-[16px]" viewBox="0 0 16 16"><path d="M5 5l2-4h8l-2 4z" fill="none" stroke="#222"/><path d="M3 7q0 3 8 0" fill="none" stroke="#d81010" stroke-width="1.500"/><rect x="1.500" y="9.500" width="6" height="6" fill="none" stroke="#222"/></svg>
      <svg class="w-[16px] h-[16px]" viewBox="0 0 16 16"><path d="M2 6h7v9H2z" fill="none" stroke="#bbb" stroke-width="1.500"/><rect x="10" y="5" width="5" height="4" fill="#aaa"/><path d="M11 5q1-3 3 0" fill="none" stroke="#aaa"/></svg>
      <svg class="w-[16px] h-[16px]" viewBox="0 0 16 16"><path d="M1 7l5-6 8 3 1 8-8 3-6-3z" fill="none" stroke="#1030b0"/><path d="M1 8h14M7 1v14" stroke="#c01818"/></svg>
      <svg class="w-[16px] h-[16px]" viewBox="0 0 16 16"><path d="M3 13L13 3M3 13h11" fill="none" stroke="#d81010" stroke-width="1.800"/><path d="M1 11h4v4H1zM11 1h4v4h-4zM11 11h4v4h-4z" fill="#0a1a90"/></svg>
      <svg class="w-[16px] h-[16px]" viewBox="0 0 16 16"><rect x="1.500" y="1.500" width="13" height="13" fill="none" stroke="#999" stroke-dasharray="2 1"/><path d="M3 3h10v10H3z" fill="none" stroke="#0a1a70"/><path d="M3 13L13 3" stroke="#d81010"/></svg>
    </div>
  </div>

  <!-- status bar -->
  <div class="h-[27px] flex items-start border-t border-[#cacaca] pl-[1325px] relative">
    <span class="w-[41px] pt-[7px] leading-[18px]">FANG</span>
    <span class="w-[36px] h-[26px] border-l border-[#d8d8d8] pl-[5px] pt-[7px] leading-[18px]">GEO</span>
    <span class="w-[22px] h-[26px] border-l border-[#d8d8d8]"></span>
    <div class="w-[121px] flex pt-[4px]"><div class="w-[9px] h-[22px] flex flex-col text-[10px] leading-[10px]"><span class="w-[8px] h-[8px] border border-[#333] border-t-2 bg-white"></span><span class="mt-[3px]">X</span></div><div class="w-[95px] h-[23px] border border-b-0 border-black bg-white pl-[5px] leading-[24px]">14,81 mm</div></div>
    <div class="w-[121px] flex pt-[4px]"><div class="w-[9px] h-[22px] flex flex-col text-[10px] leading-[10px]"><span class="w-[8px] h-[8px] border border-[#333] border-t-2 bg-white"></span><span class="mt-[3px]">Y</span></div><div class="w-[95px] h-[23px] border border-b-0 border-black bg-white pl-[5px] leading-[24px]">-8,58 mm</div></div>
    <div class="w-[102px] flex pt-[4px]"><div class="w-[9px] h-[22px] flex flex-col text-[10px] leading-[10px]"><span class="w-[8px] h-[8px] border border-[#333] border-t-2 bg-white"></span><span class="mt-[3px]">Z</span></div><div class="w-[95px] h-[23px] border border-b-0 border-black bg-white pl-[5px] leading-[24px]">-6,5 mm</div></div>
    <span class="w-[70px] h-[26px] border-l border-[#d8d8d8] pl-[4px] pt-[4px] leading-[18px]">&gt;10000%</span>
    <span class="h-[26px] border-l border-[#d8d8d8] pl-[7px] pt-[4px] leading-[18px]">9:42</span>
  </div>
  <div class="h-[2px] bg-black"></div>
  <div class="flex-1"></div>

  <!-- Bloecke side tab -->
  <div class="absolute left-[1896px] top-[23px] w-[21px] h-[75px] bg-white flex flex-col items-center">
    <svg class="w-[16px] h-[16px] mt-[5px]" viewBox="0 0 16 16"><rect x=".5" y=".5" width="15" height="15" fill="#e8e8d0" stroke="#000"/><rect x=".5" y=".5" width="15" height="3" fill="#000050"/><path d="M4 5h5v5H4zM7 8h5v5H7z" fill="none" stroke="#111"/></svg>
    <span class="[writing-mode:vertical-rl] mt-[2px] text-[15px] tracking-normal leading-none font-['Liberation_Sans',sans-serif]">Blöcke</span>
  </div>

  <!-- floating selection panel -->
  <div class="absolute left-[1480px] top-[183px] w-[393px] h-[799px] border border-[#12232f] bg-[#f0f0f0] flex flex-col">
    <div class="flex-1 flex flex-col border-x-[3px] border-b-[3px] border-[#a9d1ec]">
      <div class="h-[30px] flex-none -mx-[3px] pl-[5px] pr-[6px] pb-[2px] flex items-center bg-gradient-to-b from-[#9cb8d6] to-[#d2e0ef] text-[14px]">
        <span>Auswahl</span>
        <svg class="ml-auto mr-[-2px] w-[18px] h-[18px]" viewBox="0 0 18 18"><circle cx="10" cy="7" r="5.500" fill="#dfe6ec" stroke="#8a9aa8"/><path d="M5 12l-4 5M7 5l6 6" stroke="#8a9aa8"/></svg>
        <svg class="ml-[4px] w-[15px] h-[15px] bg-[#b8c6d4] border border-white" viewBox="0 0 15 15"><path d="M3 3l7 7M10 3l-7 7" stroke="#fff" stroke-width="2"/></svg>
      </div>
      <!-- panel toolbar -->
      <div class="h-[32px] flex-none flex items-center pb-[1px] pl-[5px]">
        <svg class="w-[16px] h-[16px] mx-[3px]" viewBox="0 0 16 16"><path d="M2 3h8l3 3v9H2zM11 1h4v5h-2" fill="#fff" stroke="#111"/><path d="M4 7h7M4 10h7M4 13h5" stroke="#111"/></svg>
        <span class="w-[23px] text-[12px] font-semibold tracking-[-1px] text-center text-black">Alle</span>
        <svg class="w-[16px] h-[16px] mx-[3px]" viewBox="0 0 16 16"><path d="M1 6h14v5H1z" fill="#bbb" stroke="#111" stroke-dasharray="2 1"/><path d="M3 1v4M6 1v4M9 1v4M12 1v4" stroke="#111"/><path d="M4 12h8l-4 3z" fill="#111"/></svg>
        <div class="w-[22px] h-[21px] ml-[1px] bg-[#fbfbfb] border border-[#e2e2e2] flex items-center justify-center"><svg class="w-[18px] h-[18px]" viewBox="0 0 18 18"><path d="M1 5q5-6 10 0-5 5-10 0z" fill="#0a1fa8"/><circle cx="6" cy="5" r="2" fill="#fff"/><path d="M13 2h4M13 5h4M13 8h4" stroke="#111"/><path d="M1 12h13" stroke="#d020d0" stroke-width="3"/><path d="M1 16h13" stroke="#111" stroke-width="1.500"/></svg></div>
        <svg class="w-[16px] h-[16px] ml-[4px] mr-[3px]" viewBox="0 0 16 16"><path d="M1.500 1.500h7v10h-7z" fill="#fff" stroke="#1a1a50"/><path d="M6.500 5.500h8v10h-8z" fill="#fff" stroke="#1a1a50"/><path d="M8 8h5M8 11h5" stroke="#1a1a50"/></svg>
        <svg class="w-[16px] h-[16px] mx-[3px]" viewBox="0 0 16 16"><rect x=".5" y=".5" width="15" height="15" fill="#fff" stroke="#000060"/><rect width="16" height="3" fill="#000060"/><path d="M4 3v12M8 3v12M12 3v12M1 7h14M1 11h14" stroke="#000060"/></svg>
        <svg class="w-[14px] h-[16px] mx-[4px]" viewBox="0 0 14 16"><rect x=".5" y=".5" width="13" height="15" fill="#fff" stroke="#555"/><text x="4" y="12" font-family="Liberation Serif" font-style="italic" font-weight="700" font-size="11" fill="#000090">f</text></svg>
        <svg class="w-[16px] h-[16px] ml-[4px] mr-[3px]" viewBox="0 0 16 16"><circle cx="6.500" cy="6.500" r="5" fill="#fff" stroke="#333"/><path d="M10 10l4 4" stroke="#003080" stroke-width="2"/></svg>
        <svg class="w-[16px] h-[16px] ml-[5px]" viewBox="0 0 16 16"><rect x="1" y="1" width="3" height="9" fill="#a01080"/><rect x="1" y="12" width="3" height="3" fill="#a01080"/><path d="M7 4h8M7 8h8M7 12h8" stroke="#333" stroke-dasharray="2 1"/></svg>
      </div>
      <!-- part tree -->
      <div class="relative h-[257px] flex-none mx-[3px] bg-white border border-[#8a9198] pt-[1px]">
        <svg class="absolute left-0 top-0 pointer-events-none" width="60" height="200"><path d="M31.500 23V189M31.500 34.500H40M31.500 56.500H40M31.500 78.500H40M31.500 100.500H40M31.500 122.500H40M31.500 166.500H40M31.500 188.500H42M50.500 133V144.500H60M17 12.500H22" fill="none" stroke="#777" stroke-dasharray="1 1"/></svg>
        <div class="relative h-[22px] flex items-center pl-[6px]"><svg class="w-[11px] h-[11px]"><use href="#minus"/></svg><svg class="ml-[4px] w-[16px] h-[16px]" viewBox="0 0 16 16"><path d="M1 1h5v3H1zM5 6h5v3H5zM5 11h5v3H5zM3 4v9h2M3 7h2" fill="none" stroke="#107a20" stroke-width="1.200"/></svg><span class="ml-[7px]">Teilestruktur</span></div>
        <div class="relative h-[22px] flex items-center pl-[25px]"><svg class="w-[11px] h-[11px]"><use href="#plus"/></svg><svg class="ml-[5px] w-[16px] h-[16px]"><use href="#hole"/></svg><span class="ml-[6px]">Loch</span></div>
        <div class="relative h-[22px] flex items-center pl-[25px]"><svg class="w-[11px] h-[11px]"><use href="#plus"/></svg><svg class="ml-[5px] w-[16px] h-[16px]"><use href="#hole"/></svg><span class="ml-[6px]">Loch</span></div>
        <div class="relative h-[22px] flex items-center pl-[25px]"><svg class="w-[11px] h-[11px]"><use href="#plus"/></svg><svg class="ml-[5px] w-[16px] h-[16px]"><use href="#hole"/></svg><span class="ml-[6px]">Loch</span></div>
        <div class="relative h-[22px] flex items-center pl-[25px]"><svg class="w-[11px] h-[11px]"><use href="#plus"/></svg><svg class="ml-[5px] w-[16px] h-[16px]"><use href="#hole"/></svg><span class="ml-[6px]">Loch</span></div>
        <div class="relative h-[22px] flex items-center pl-[25px]"><svg class="w-[11px] h-[11px]"><use href="#minus"/></svg><svg class="ml-[5px] w-[16px] h-[16px]"><use href="#hole"/></svg><span class="ml-[6px]">Loch</span></div>
        <div class="relative h-[22px] flex items-center pl-[59px]"><svg class="w-[16px] h-[16px]" viewBox="0 0 16 16"><rect x="1" y="0" width="2.500" height="8" fill="#e0a000"/><circle cx="2.300" cy="11.500" r="2" fill="#f2c200" stroke="#a04000" stroke-width=".7"/><rect x="5" y="4" width="10" height="9" fill="#2a34b0"/><path d="M7 6h6l-3 5z" fill="#dfe4ff"/></svg><span class="ml-[3px] h-[21px] border border-r-0 border-[#cde0ea] pl-[3px] pr-[2px] leading-[20px]">Loch</span></div>
        <div class="relative h-[22px] flex items-center pl-[25px]"><svg class="w-[11px] h-[11px]"><use href="#plus"/></svg><svg class="ml-[5px] w-[16px] h-[16px]" viewBox="0 0 16 16"><rect x="1.500" y="1.500" width="12" height="12" rx="1" fill="#7cc890" stroke="#1e7c3a"/><circle cx="7.500" cy="7.500" r="3" fill="none" stroke="#1e7c3a"/><path d="M3 15h12V3" fill="none" stroke="#3c9a58" stroke-width="1.500"/></svg><span class="ml-[6px]">Loch</span></div>
        <div class="relative h-[22px] flex items-center pl-[41px]"><svg class="w-[16px] h-[16px]" viewBox="0 0 16 16"><path d="M2 4l8-3 4 3v9l-8 2-4-3z" fill="#cfd3f0" stroke="#1a2a9c"/><path d="M2 4l5 2 7-2M7 6v9" fill="none" stroke="#1a2a9c"/></svg><span class="ml-[7px]">Normale Extrusion</span></div>
      </div>
      <!-- property tabs -->
      <div class="h-[27px] flex-none flex items-end px-[3px]">
        <div class="h-[23px] w-[107px] bg-[#f7f7f7] pl-[7px] leading-[26px]">Eigenschaften</div>
        <div class="h-[21px] w-[147px] border-t border-r border-[#dadada] pl-[5px] leading-[24px]">Zwangsbedingungen</div>
      </div>
      <div class="h-[24px] flex-none flex pl-[10px] leading-[23px]"><span class="w-[95px]">Eigenschaft</span><span>Wert</span></div>
      <!-- property grid -->
      <div class="relative h-[364px] flex-none ml-[2px] mr-[3px] bg-white overflow-hidden">
        <svg class="absolute left-0 top-0" width="50" height="320"><path d="M13.500 20V260M32.500 50V227M32.500 60.500H42M32.500 84.500H42M32.500 108.500H42M32.500 132.500H42M32.500 156.500H42M32.500 180.500H42M32.500 204.500H42M32.500 228.500H42M32.500 265V300M32.500 276.500H42M32.500 300.500H42" fill="none" stroke="#777" stroke-dasharray="1 1"/></svg>
        <div class="flex h-[24px] border-b-2 border-[#e6e6e6]"><div class="relative w-[95px] flex items-center pl-[8px] border-r-2 border-[#e6e6e6]"><svg class="w-[11px] h-[11px]"><use href="#plus"/></svg><b class="ml-[4px] whitespace-nowrap">Allgeme..</b></div></div>
        <div class="flex h-[24px] border-b-2 border-[#e6e6e6]"><div class="relative w-[95px] flex items-center pl-[8px] border-r-2 border-[#e6e6e6]"><svg class="w-[11px] h-[11px]"><use href="#minus"/></svg><b class="ml-[4px]">Loch</b></div></div>
        <div class="flex h-[24px] border-b-2 border-[#e6e6e6]"><div class="relative w-[95px] flex items-center pl-[42px] border-r-2 border-[#e6e6e6]"><span class="absolute left-[41px] top-0 w-[52px] h-[22px] bg-[#b3d5f1] border-t border-l border-dotted border-[#333]"></span><span class="relative ml-[1px]">Typ</span></div><span class="pl-[4px] leading-[26px]">Senkbohrung</span><svg class="ml-auto mr-[5px] mt-[9px] w-[8px] h-[5px]"><use href="#drop"/></svg></div>
        <div class="flex h-[24px] border-b-2 border-[#e6e6e6]"><div class="relative w-[95px] flex items-center pl-[43px] border-r-2 border-[#e6e6e6]"><span>Skalie...</span></div></div>
        <div class="flex h-[24px] border-b-2 border-[#e6e6e6]"><div class="relative w-[95px] flex items-center pl-[43px] border-r-2 border-[#e6e6e6]"><span>Reic...</span></div></div>
        <div class="flex h-[24px] border-b-2 border-[#e6e6e6]"><div class="relative w-[95px] flex items-center pl-[43px] border-r-2 border-[#e6e6e6]"><span>Tiefe</span></div></div>
        <div class="flex h-[24px] border-b-2 border-[#e6e6e6]"><div class="relative w-[95px] flex items-center pl-[43px] border-r-2 border-[#e6e6e6]"><span>Durc...</span></div></div>
        <div class="flex h-[24px] border-b-2 border-[#e6e6e6]"><div class="relative w-[95px] flex items-center pl-[43px] border-r-2 border-[#e6e6e6]"><span>Fasen</span></div></div>
        <div class="flex h-[24px] border-b-2 border-[#e6e6e6]"><div class="relative w-[95px] flex items-center pl-[43px] border-r-2 border-[#e6e6e6]"><span>Bohr...</span></div><span class="pl-[2px] leading-[20px]">1 mm</span></div>
        <div class="flex h-[24px] border-b-2 border-[#e6e6e6]"><div class="relative w-[95px] flex items-center pl-[43px] border-r-2 border-[#e6e6e6]"><span>Bohr...</span></div><span class="pl-[2px] leading-[20px]">2 mm</span></div>
        <div class="flex h-[24px] border-b-2 border-[#e6e6e6]"><div class="relative w-[95px] flex items-center pl-[8px] border-r-2 border-[#e6e6e6]"><svg class="w-[11px] h-[11px]"><use href="#minus"/></svg><b class="ml-[4px]">Metrik</b></div></div>
        <div class="flex h-[24px] border-b-2 border-[#e6e6e6]"><div class="relative w-[95px] flex items-center pl-[43px] border-r-2 border-[#e6e6e6]"><span>Objek...</span></div><span class="pl-[2px] leading-[20px] text-[#808080]">Loch</span></div>
        <div class="flex h-[24px] border-b-2 border-[#e6e6e6]"><div class="relative w-[95px] flex items-center pl-[43px] border-r-2 border-[#e6e6e6]"><span>Ausd...</span></div><span class="pl-[2px] leading-[20px] text-[#808080]">4,73 mm</span></div>
        <div class="flex h-[24px] border-b-2 border-[#e6e6e6]"><div class="w-[95px] border-r-2 border-[#e6e6e6]"></div></div>
        <div class="flex h-[24px] border-b-2 border-[#e6e6e6]"><div class="w-[95px] border-r-2 border-[#e6e6e6]"></div></div>
        <div class="flex h-[6px]"><div class="w-[95px] border-r-2 border-[#e6e6e6]"></div></div>

        <!-- open dropdown -->
        <div class="absolute left-[95px] top-[72px] w-[285px] h-[121px] bg-white border border-[#1c6190] shadow-[2px_2px_4px_rgba(0,0,0,0.35)] leading-[20px]">
          <div class="h-[20px] pl-[1px]">Einfaches Loch</div>
          <div class="h-[20px] pl-[1px]">Kegelsenkung</div>
          <div class="h-[20px] pl-[1px] bg-[#b3d5f1]">Senkbohrung</div>
          <div class="h-[20px] pl-[1px]">Senkbohrer</div>
          <div class="h-[20px] pl-[1px]">Gewindeloch</div>
          <div class="h-[20px] pl-[1px]">Erhebung</div>
        </div>
      </div>
      <!-- grid scrollbar -->
      <div class="h-[20px] flex-none flex items-center pl-[8px] pr-[8px]">
        <svg class="w-[9px] h-[12px]" viewBox="0 0 9 12"><path d="M7 1L2 6l5 5" fill="none" stroke="#555" stroke-width="2"/></svg>
        <div class="ml-[6px] w-[21px] h-[19px] bg-[#cdcdcd]"></div>
        <svg class="ml-auto mr-[2px] w-[9px] h-[12px]" viewBox="0 0 9 12"><path d="M2 1l5 5-5 5" fill="none" stroke="#555" stroke-width="2"/></svg>
      </div>
      <div class="pl-[2px] pt-[6px] leading-[20px]">1 von 10 ausgewählt:</div>
    </div>
  </div>
</div>
</body>
</html>
